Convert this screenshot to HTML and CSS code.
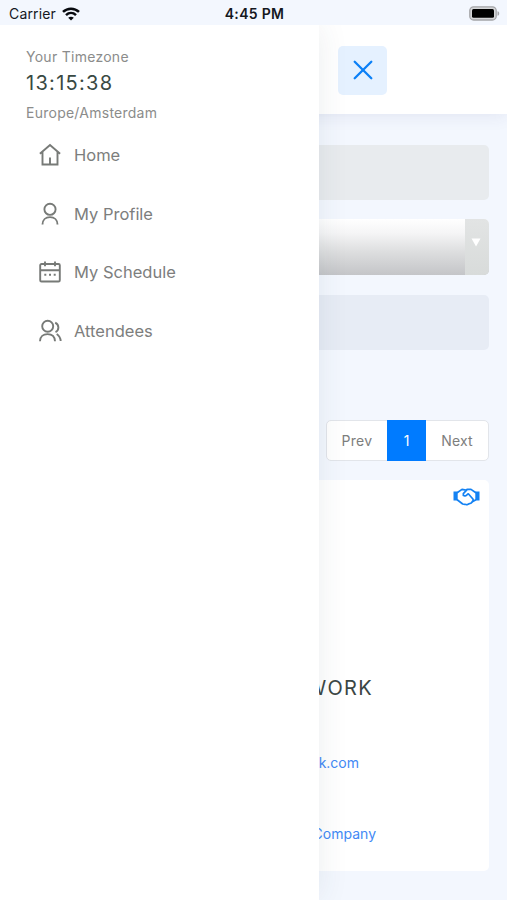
FILE: index.html
```html
<!DOCTYPE html>
<html lang="en">
<head>
<meta charset="utf-8">
<title>Attendees</title>
<link rel="stylesheet" href="styles.css">
</head>
<body>
<div class="status">
  <div class="carrier"><span>Carrier</span>
    <svg width="18" height="14" viewBox="0 0 18 14" fill="none" stroke="#080a0f" stroke-width="2.5"><path d="M1 4.9C5.5.6 12.5.6 17 4.9M4 8.1c2.900-2.700 7.100-2.700 10 0"/><path d="M9 13.500 6.200 10.700c1.600-1.400 4-1.400 5.600 0z" fill="#080a0f" stroke="none"/></svg>
  </div>
  <strong class="clock">4:45 PM</strong>
  <svg class="battery" width="31" height="15" viewBox="0 0 31 15"><rect x=".8" y=".8" width="26.400" height="13.200" rx="3.800" fill="#d5d6d8" stroke="#a4a5a8" stroke-width="1.300"/><rect x="3" y="3" width="22" height="8.800" rx="1.500" fill="#000"/><path d="M28.500 5.200c2.300.5 2.300 4 0 4.600z" fill="#a4a5a8"/></svg>
</div>
<div class="screen">
  <header class="topbar">
    <button class="close" aria-label="Close menu"><svg width="20" height="20" viewBox="0 0 20 20" fill="none" stroke="#0b80f7" stroke-width="2.300" stroke-linecap="round"><path d="m1.700 1.700 16.600 16.600M18.300 1.700 1.700 18.300"/></svg></button>
  </header>
  <main class="content">
    <div class="field field-gray"></div>
    <div class="select"><div class="select-arrow"><svg width="10" height="9" viewBox="0 0 10 9"><path d="M.5.500h9L5 8.500z" fill="#fff"/></svg></div></div>
    <div class="field field-blue"></div>
    <nav class="pager"><span class="prev">Prev</span><span class="current">1</span><span class="next">Next</span></nav>
    <section class="card">
      <svg class="shake" width="27" height="18" viewBox="0 0 27 18" fill="none" stroke="#1482f3" stroke-width="1.700" stroke-linejoin="round" stroke-linecap="round"><path d="M.5 3.600h4.200v9H.500zM22.300 3.600h4.200v9h-4.200z" fill="#1482f3" stroke="none"/><path d="M4.500 4.500 9 1.400l4 .7 1.300-.8L18 1.400l4.500 3.100M4.500 12l5.200 4 2.200.3 2 .5 1.800-.9 2-.6 1.700-1.500 3.100-1.800M14.300 1.300l-4 4.300c-.6 2.400 2 3 3.300 1.500l1.700-1.300 4.600 5.200c.5.900.2 2-.7 2.500"/></svg>
      <h2 class="name">WORK</h2>
      <a class="email">k.com</a>
      <a class="company">Company</a>
    </section>
  </main>
  <aside class="drawer">
    <div class="tz-label">Your Timezone</div>
    <div class="tz-time">13:15:38</div>
    <div class="tz-zone">Europe/Amsterdam</div>
    <nav class="menu">
      <a class="item"><svg width="24" height="24" viewBox="0 0 24 24"><path d="m1.900 10.700 10.100-8.700 10.100 8.700M4.500 8.900v12.600h15V8.900M12 14.500v7"/></svg><span>Home</span></a>
      <a class="item"><svg width="24" height="24" viewBox="0 0 24 24"><circle cx="12" cy="7.300" r="5.600"/><path d="M4.500 22.500c0-4.600 3.200-7.400 7.500-7.400s7.500 2.800 7.500 7.400"/></svg><span>My Profile</span></a>
      <a class="item"><svg width="24" height="24" viewBox="0 0 24 24"><rect x="2.200" y="4" width="19.600" height="17.500" rx="1.300"/><path d="M2.200 10.200h19.600M7 1.500v4.800M17 1.500v4.800M6.300 14.800h2M11 14.800h2M15.700 14.800h2"/></svg><span>My Schedule</span></a>
      <a class="item"><svg width="24" height="24" viewBox="0 0 24 24"><circle cx="9.700" cy="7.300" r="5.500"/><path d="M2 22.200c.1-4.600 3.300-7.100 7.500-7.100s7.300 2.500 7.500 7.100M17.200 3.700c4.300 2.200 4.100 7.700.3 9.400M18.700 15c2.400 1.500 3.700 3.900 4 7"/></svg><span>Attendees</span></a>
    </nav>
  </aside>
</div>
</body>
</html>
```
FILE: styles.css
```css
* { box-sizing: border-box; }
body { margin: 0; width: 507px; height: 900px; overflow: hidden; background: #f3f7fe; font-family: Inter, "Liberation Sans", sans-serif; color: #7d7e7d; }
.status { height: 25px; display: grid; grid-template-columns: 1fr auto 1fr; align-items: center; padding: 2px 7px 0 9px; color: #15181e; font-size: 14px; line-height: 22px; }
.carrier { display: flex; align-items: center; gap: 6px; letter-spacing: .15px; }
.clock { font-weight: 600; font-size: 14px; letter-spacing: .3px; }
.battery { justify-self: end; }
.screen { position: relative; height: 875px; overflow: hidden; }
.topbar { height: 89px; background: #fff; padding: 20.500px 0 0 338px; box-shadow: 0 2px 16px rgba(50, 60, 120, .09); }
.close { width: 49px; height: 49px; border: 0; border-radius: 5px; padding: 0; background: #e5f1ff; display: flex; align-items: center; justify-content: center; }
.content { padding: 31px 18px 0; display: flex; flex-direction: column; }
.field { height: 55px; border-radius: 5px; }
.field-gray { background: #e8ebee; }
.field-blue { background: #e7ecf5; }
.select { height: 56px; margin: 19px 0 19.500px; border-radius: 5px; overflow: hidden; display: flex; justify-content: flex-end; background: linear-gradient(#fff, #f5f5f6 25%, #dcddde 60%, #c4c5c8); }
.select-arrow { width: 24px; background: linear-gradient(#e2e4e4, #d8dbda); display: flex; justify-content: center; padding: 19px 2px 0 0; }
.pager { align-self: flex-end; width: 163px; height: 41px; margin-top: 70.500px; display: flex; border: 1px solid #e2e5ea; border-radius: 5px; background: #fff; font-size: 14px; line-height: 39px; text-align: center; }
.prev { width: 60px; letter-spacing: .3px; }
.current { width: 39px; margin: -1px 0; padding-top: 1px; background: #007bff; color: #fff; }
.next { width: 62px; letter-spacing: .2px; }
.card { height: 391px; margin-top: 19px; background: #fff; border-radius: 5px; display: flex; flex-direction: column; align-items: flex-end; }
.shake { margin: 8px 9px 0 0; flex: none; }
.name { margin: 170px 116px 0 0; font-size: 20px; line-height: 24px; font-weight: 400; letter-spacing: 1.300px; color: #3b4644; }
.email { margin: 53px 130px 0 0; font-size: 14px; line-height: 20px; color: #4289f5; }
.company { margin: 51px 113px 0 0; font-size: 14px; line-height: 20px; color: #4289f5; }
.drawer { position: absolute; left: 0; top: 0; width: 318.500px; height: 875px; padding: 22px 26px; background: #fff; box-shadow: 0 0 30px rgba(40, 65, 75, .09); }
.tz-label { font-size: 14px; line-height: 20px; letter-spacing: .27px; color: #8b8c8b; }
.tz-time { font-size: 20px; line-height: 28px; margin-top: 2px; letter-spacing: 1.300px; color: #394943; }
.tz-zone { font-size: 14px; line-height: 20px; margin-top: 6px; letter-spacing: .25px; color: #8b8c8b; }
.menu { padding: 20px 0 0 12px; display: flex; flex-direction: column; gap: 34.600px; }
.item { height: 24px; display: flex; align-items: center; gap: 12px; font-size: 16.500px; line-height: 24px; }
.item svg { fill: none; stroke: #777a77; stroke-width: 1.900; flex: none; }
```
